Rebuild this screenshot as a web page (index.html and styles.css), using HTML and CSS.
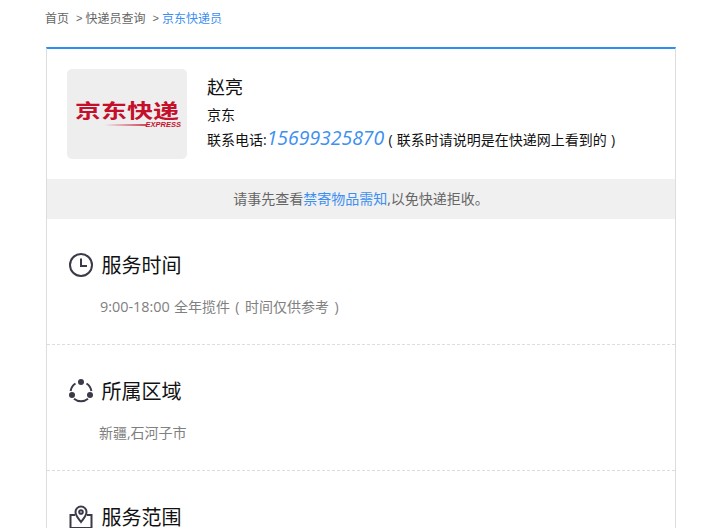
FILE: index.html
```html
<!DOCTYPE html>
<html lang="zh-CN">
<head>
<meta charset="utf-8">
<title>京东快递员</title>
<link rel="stylesheet" href="styles.css">
</head>
<body>
<nav class="crumbs">
  <a class="crumb">首页</a><span class="sep">&gt;</span><a class="crumb">快递员查询</a><span class="sep">&gt;</span><a class="crumb current">京东快递员</a>
</nav>
<main class="card">
  <header class="profile">
    <div class="logo">
      <div class="logo-cn">京东快递</div>
      <div class="logo-en"><span class="swoosh"></span><span>EXPRESS</span></div>
    </div>
    <div class="info">
      <h1 class="name">赵亮</h1>
      <p class="company">京东</p>
      <p class="contact">联系电话:<a class="phone">15699325870</a><span class="hint"> ( 联系时请说明是在快递网上看到的 )</span></p>
    </div>
  </header>
  <p class="notice">请事先查看<a class="link">禁寄物品需知</a>,以免快递拒收。</p>
  <section class="section">
    <h2 class="title">
      <svg class="icon" viewBox="0 0 24 24" fill="none" stroke="#3a3a48" stroke-width="2"><circle cx="12" cy="12" r="11"/><path d="M12 5.5V13H18"/></svg>
      <span class="title-text">服务时间</span>
    </h2>
    <p class="detail"><span class="time">9:00-18:00</span> 全年揽件<span class="note"> ( 时间仅供参考 )</span></p>
  </section>
  <section class="section">
    <h2 class="title">
      <svg class="icon" viewBox="0 0 24 24" fill="none" stroke="#3a3a48" stroke-width="2"><path d="M6.5 4.5A11 11 0 0 0 1.6 12M22.4 12A11 11 0 0 0 17.5 4.5M5 19.8A11 11 0 0 0 19 19.8"/><g fill="#3a3a48" stroke="none"><circle cx="12" cy="3" r="3"/><circle cx="3" cy="16" r="3"/><circle cx="21" cy="16" r="3"/></g></svg>
      <span class="title-text">所属区域</span>
    </h2>
    <p class="detail">新疆,石河子市</p>
  </section>
  <section class="section">
    <h2 class="title">
      <svg class="icon" viewBox="0 0 24 24" fill="none" stroke="#3a3a48" stroke-width="2"><path d="M6 10H1.5V23H22.5V10H18"/><path d="M12 17C9 13 6.5 10.5 6.5 7A5.5 5.5 0 0 1 17.5 7C17.5 10.5 15 13 12 17Z"/><circle cx="12" cy="7" r="1.8"/></svg>
      <span class="title-text">服务范围</span>
    </h2>
  </section>
</main>
</body>
</html>
```

FILE: styles.css
```css
html, body {
  margin: 0;
  padding: 0;
  height: 528px;
  overflow: hidden;
  background: #fff;
}
body {
  font-family: "Open Sans", "Noto Sans CJK SC", sans-serif;
  font-size: 14px;
  color: #333;
}
p, h1, h2 { margin: 0; font-weight: 400; }
.crumbs {
  display: flex;
  align-items: center;
  height: 36px;
  padding: 0 0 0 45px;
  font-size: 12px;
  color: #666;
}
.sep { margin: 0 3px 0 7px; font-family: "Liberation Sans", sans-serif; font-size: 11px; }
.current { color: #3d8ff0; }
.card {
  margin: 11px 31px 0 46px;
  border: 1px solid #ddd;
  border-top: 2px solid #2b8ff5;
  border-bottom: 0;
}
.profile {
  display: flex;
  gap: 20px;
  padding: 20px;
  height: 90px;
}
.logo {
  width: 120px;
  height: 90px;
  flex: none;
  box-sizing: border-box;
  padding-top: 29px;
  background: #eee;
  border-radius: 5px;
  overflow: hidden;
  color: #c5102c;
}
.logo-cn {
  font-size: 26px;
  line-height: 24px;
  font-weight: 700;
  text-align: center;
  white-space: nowrap;
  transform: scaleY(0.76);
}
.logo-en {
  display: flex;
  justify-content: flex-end;
  align-items: center;
  padding-right: 6px;
  font: italic 700 7.5px/6px "Liberation Sans", sans-serif;
}
.swoosh {
  width: 42px;
  height: 2px;
  background: linear-gradient(90deg, #eee, #d0485c);
}
.info { padding-top: 5px; }
.name { font-size: 18px; line-height: 26px; color: #111; }
.company { margin-top: 5px; font-size: 14px; line-height: 20px; color: #111; }
.contact { margin-top: -1px; font-size: 14px; line-height: 28px; color: #111; white-space: nowrap; }
.phone { font-size: 19.4px; font-style: italic; color: #3d8ff0; }
.hint { word-spacing: 0.6px; }
.notice {
  height: 40px;
  line-height: 40px;
  background: #f0f0f0;
  text-align: center;
  color: #666;
  font-size: 14px;
}
.link { color: #3d8ff0; }
.section {
  padding: 30px 22px 21px;
  height: 74px;
  border-bottom: 1px dashed #ddd;
}
.title {
  display: flex;
  align-items: center;
  gap: 8px;
  height: 32px;
  font-size: 20px;
  color: #111;
}
.title-text { margin: -2px 0 0 0.5px; }
.icon { width: 24px; height: 24px; flex: none; }
.detail {
  margin: 13px 0 0 30px;
  line-height: 26px;
  font-size: 14px;
  color: #808080;
  word-spacing: 0.5px;
}
.time { font-size: 14.4px; margin-left: 1px; }
.note { word-spacing: 1.8px; }
```
